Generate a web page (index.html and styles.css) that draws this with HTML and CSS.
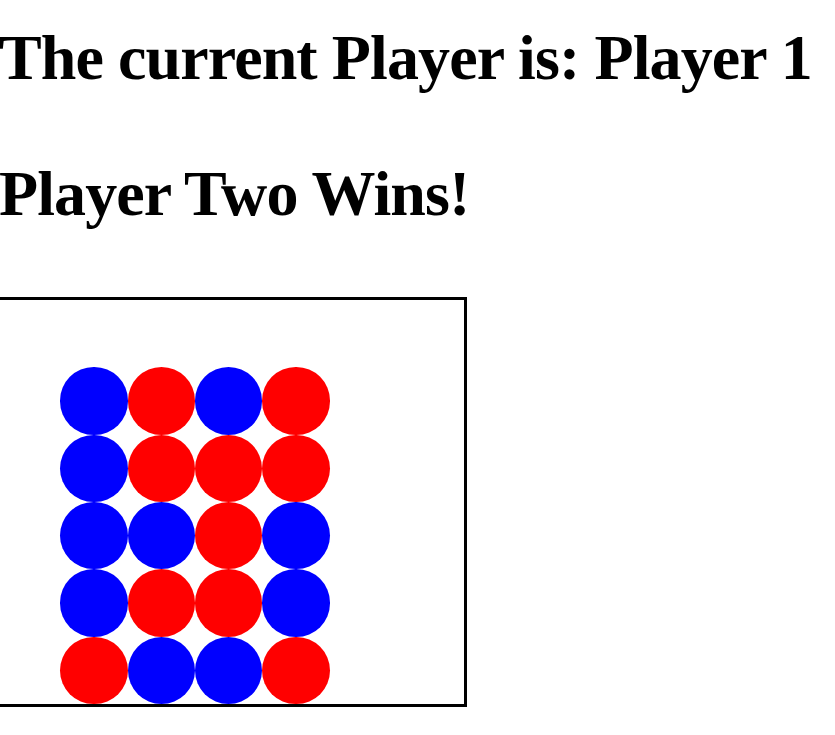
FILE: index.html
```html
<!DOCTYPE html>
<html lang="en">
<head>
  <meta charset="UTF-8">
  <meta name="viewport" content="width=device-width, initial-scale=1.0">
  <title>Connect Four</title>
  <link rel="stylesheet" href="styles.css">
</head>
<body>

  <h1 class="status">The current Player is: Player 1</h1>
  <h1 class="status winner">Player Two Wins!</h1>

  <div class="board">
    <div class="cell"></div><div class="cell"></div><div class="cell"></div><div class="cell"></div><div class="cell"></div><div class="cell"></div><div class="cell"></div>
    <div class="cell"></div><div class="cell blue"></div><div class="cell red"></div><div class="cell blue"></div><div class="cell red"></div><div class="cell"></div><div class="cell"></div>
    <div class="cell"></div><div class="cell blue"></div><div class="cell red"></div><div class="cell red"></div><div class="cell red"></div><div class="cell"></div><div class="cell"></div>
    <div class="cell"></div><div class="cell blue"></div><div class="cell blue"></div><div class="cell red"></div><div class="cell blue"></div><div class="cell"></div><div class="cell"></div>
    <div class="cell"></div><div class="cell blue"></div><div class="cell red"></div><div class="cell red"></div><div class="cell blue"></div><div class="cell"></div><div class="cell"></div>
    <div class="cell"></div><div class="cell red"></div><div class="cell blue"></div><div class="cell blue"></div><div class="cell red"></div><div class="cell"></div><div class="cell"></div>
  </div>

</body>
</html>
```

FILE: styles.css
```css
body {
  font-family: 'Liberation Serif', 'Times New Roman', serif;
  background-color: #fff;
  color: #000;
  margin: 0;
  padding: 0;
  overflow: hidden;
}

.status {
  font-size: 64px;
  font-weight: bold;
  line-height: 64px;
  letter-spacing: -0.9px;
  white-space: nowrap;
  margin: 26px 0 0 -1px;
}

.winner {
  margin-top: 72px;
}

.board {
  display: grid;
  grid-template-columns: repeat(7, 67.33px);
  grid-template-rows: repeat(6, 67.33px);
  width: max-content;
  margin: 71px 0 0 -10px;
  border: 3px solid #000;
}

.cell {
  border-radius: 50%;
}

.blue {
  background-color: #00f;
}

.red {
  background-color: #f00;
}
```
